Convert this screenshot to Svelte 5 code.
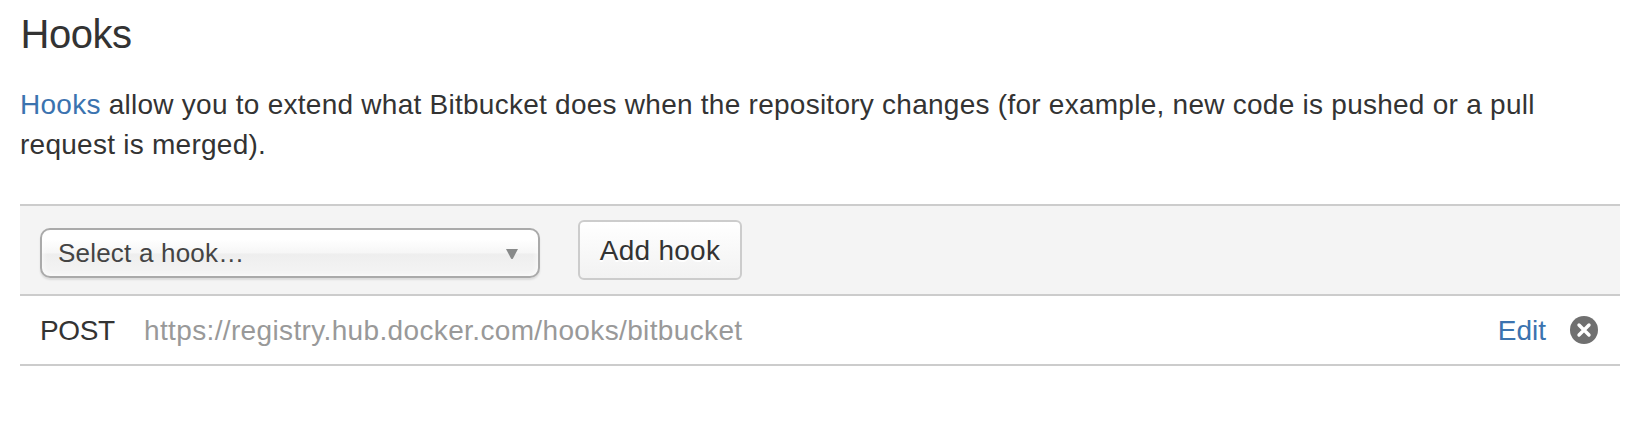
<script>
  const hooks = [{ type: 'POST', url: 'https://registry.hub.docker.com/hooks/bitbucket' }];
</script>

<main>
  <h1>Hooks</h1>
  <p>
    <a href="#hooks">Hooks</a> allow you to extend what Bitbucket does when the repository changes (for example, new code is pushed or a pull request is merged).
  </p>
  <section>
    <div class="toolbar">
      <div class="select" role="button" tabindex="0">
        <span>Select a hook…</span>
        <svg width="12" height="10" viewBox="0 0 12 10"><path d="M0 0h12L7 9.4Q6 10.4 5 9.4z" fill="#888a8a" /></svg>
      </div>
      <button>Add hook</button>
    </div>
    {#each hooks as hook}
      <div class="row">
        <span class="type">{hook.type}</span>
        <span class="url">{hook.url}</span>
        <a class="edit" href="#edit">Edit</a>
        <svg width="28" height="28" viewBox="0 0 28 28">
          <circle cx="14" cy="14" r="14" fill="#707070" />
          <path d="M9 9l10 10M19 9L9 19" stroke="#fff" stroke-width="3.4" stroke-linecap="round" />
        </svg>
      </div>
    {/each}
  </section>
</main>

<style>
  :global(body) {
    margin: 0;
    background: #fff;
  }
  main {
    box-sizing: border-box;
    width: 1650px;
    height: 424px;
    padding: 9px 30px 0 20px;
    font: 28px/40px "Liberation Sans", Arial, sans-serif;
    color: #333;
  }
  h1 {
    margin: 0 0 26px;
    padding-left: 0.5px;
    font-size: 40px;
    line-height: 50px;
    font-weight: 400;
    letter-spacing: -0.5px;
  }
  p {
    width: 1560px;
    margin: 0 0 39px;
    letter-spacing: 0.257px;
  }
  a {
    color: #3b73af;
    text-decoration: none;
  }
  section {
    border-top: 2px solid #ccc;
  }
  .toolbar {
    display: flex;
    align-items: flex-start;
    height: 88px;
    box-sizing: border-box;
    padding: 14px 20px 0;
    background: #f4f4f4;
  }
  .select {
    box-sizing: border-box;
    width: 500px;
    height: 50px;
    margin: 8px 38px 0 0;
    padding: 0 20px 0 16px;
    display: flex;
    align-items: center;
    justify-content: space-between;
    border: 2px solid #aaa;
    border-radius: 10px;
    background: linear-gradient(#fff 20%, #f6f6f6 50%, #eee 52%, #f4f4f4 100%);
    box-shadow: inset 0 0 6px #fff, 0 2px 2px rgba(0, 0, 0, 0.1);
    font-size: 26px;
    line-height: 46px;
    letter-spacing: 0.2px;
    color: #444;
  }
  .select svg {
    margin-top: 2px;
  }
  button {
    box-sizing: border-box;
    width: 164px;
    height: 60px;
    padding: 2px 0 0;
    border: 2px solid #ccc;
    border-radius: 6px;
    background: linear-gradient(#fff, #f2f2f2);
    font: inherit;
    letter-spacing: 0.25px;
    color: #333;
    text-shadow: 0 2px 0 #fff;
  }
  .row {
    display: flex;
    align-items: center;
    height: 68px;
    padding: 0 22px 0 20px;
    border-top: 2px solid #ccc;
    border-bottom: 2px solid #ccc;
  }
  .row span,
  .edit {
    padding-top: 2px;
  }
  .type {
    width: 104px;
    letter-spacing: -0.4px;
  }
  .url {
    color: #999;
    letter-spacing: 0.36px;
  }
  .edit {
    margin: 0 24px 0 auto;
  }
</style>
